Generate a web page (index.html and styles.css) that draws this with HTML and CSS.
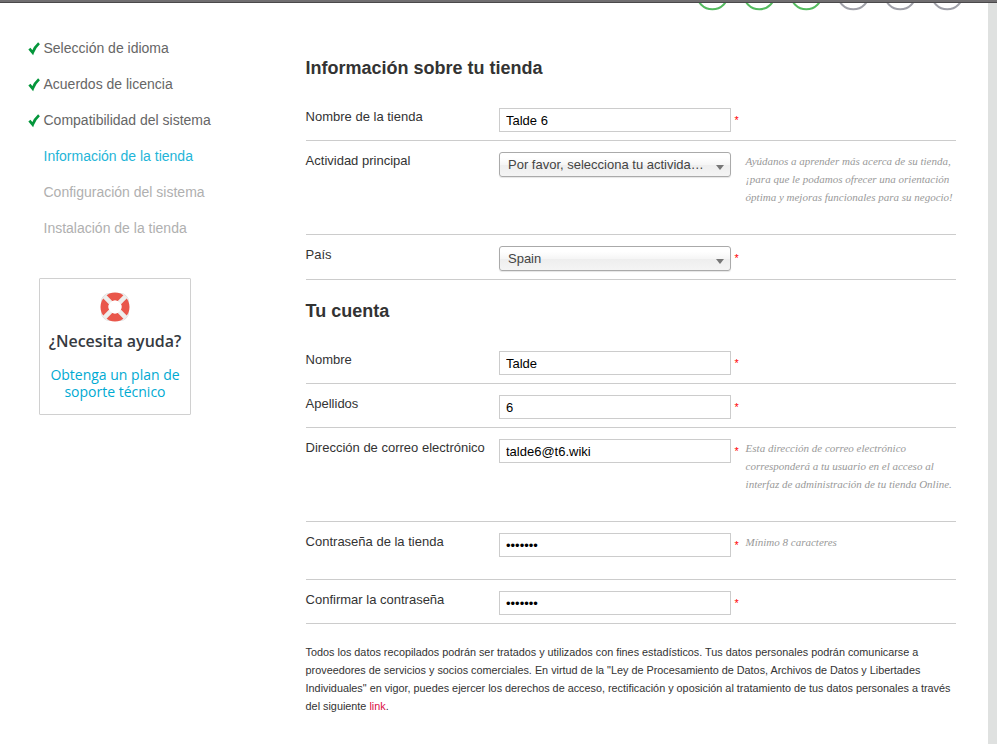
FILE: index.html
```html
<!DOCTYPE html>
<html lang="es">
<head>
<meta charset="utf-8">
<title>Asistente de instalación</title>
<link rel="stylesheet" href="styles.css">
</head>
<body>
<div class="topbar"></div>
<div class="page">
  <div class="steps">
    <svg width="270" height="8" viewBox="0 0 270 8" fill="none" stroke-width="2">
      <g stroke="#54bb5f"><circle cx="16.4" cy="-9.4" r="15.7"/><circle cx="63.3" cy="-9.4" r="15.7"/><circle cx="110.3" cy="-9.4" r="15.7"/></g>
      <g stroke="#9fa0a8"><circle cx="157.3" cy="-9.4" r="15.7"/><circle cx="204.2" cy="-9.4" r="15.7"/><circle cx="251.2" cy="-9.4" r="15.7"/></g>
    </svg>
  </div>
  <div class="columns">
    <aside class="side">
      <ul class="menu">
        <li class="done"><svg class="check" viewBox="0 0 12 13"><path d="M1.4 6.6 4.7 10.6C6 7.2 8 3.9 11 1.3"/></svg>Selección de idioma</li>
        <li class="done"><svg class="check" viewBox="0 0 12 13"><path d="M1.4 6.6 4.7 10.6C6 7.2 8 3.9 11 1.3"/></svg>Acuerdos de licencia</li>
        <li class="done"><svg class="check" viewBox="0 0 12 13"><path d="M1.4 6.6 4.7 10.6C6 7.2 8 3.9 11 1.3"/></svg>Compatibilidad del sistema</li>
        <li class="current">Información de la tienda</li>
        <li>Configuración del sistema</li>
        <li>Instalación de la tienda</li>
      </ul>
      <div class="help">
        <svg class="buoy" viewBox="0 0 30 30">
          <rect x="1.5" y="1.5" width="27" height="27" rx="8" fill="none" stroke="#d4d4d4" stroke-width=".8"/>
          <circle cx="15" cy="15" r="10.5" fill="none" stroke="#e9574b" stroke-width="8"/>
          <path d="m4.2 4.2 6.6 6.6m8.4 8.4 6.6 6.6m0-21.6-6.6 6.6m-8.4 8.4-6.6 6.6" stroke="#eeeeec" stroke-width="4.6"/>
          <circle cx="15" cy="15" r="6.5" fill="#fff"/>
        </svg>
        <div class="help-title">¿Necesita ayuda?</div>
        <div class="help-link"><div>Obtenga un plan de</div><div>soporte técnico</div></div>
      </div>
    </aside>
    <main class="content">
      <h2>Información sobre tu tienda</h2>
      <div class="row"><label>Nombre de la tienda</label><input type="text" value="Talde 6"><sup>*</sup></div>
      <div class="row tall"><label>Actividad principal</label><div class="select">Por favor, selecciona tu activida…</div><sup></sup><p class="hint">Ayúdanos a aprender más acerca de su tienda,<br>¡para que le podamos ofrecer una orientación<br>óptima y mejoras funcionales para su negocio!</p></div>
      <div class="row country"><label>País</label><div class="select">Spain</div><sup>*</sup></div>
      <h2 class="second">Tu cuenta</h2>
      <div class="row"><label>Nombre</label><input type="text" value="Talde"><sup>*</sup></div>
      <div class="row"><label>Apellidos</label><input type="text" value="6"><sup>*</sup></div>
      <div class="row tall"><label>Dirección de correo electrónico</label><input type="text" value="talde6@t6.wiki"><sup>*</sup><p class="hint">Esta dirección de correo electrónico<br>corresponderá a tu usuario en el acceso al<br>interfaz de administración de tu tienda Online.</p></div>
      <div class="row medium"><label>Contraseña de la tienda</label><input type="password" value="1234567"><sup>*</sup><p class="hint">Mínimo 8 caracteres</p></div>
      <div class="row"><label>Confirmar la contraseña</label><input type="password" value="1234567"><sup>*</sup></div>
      <p class="legal">Todos los datos recopilados podrán ser tratados y utilizados con fines estadísticos. Tus datos personales podrán comunicarse a<br>proveedores de servicios y socios comerciales. En virtud de la "Ley de Procesamiento de Datos, Archivos de Datos y Libertades<br>Individuales" en vigor, puedes ejercer los derechos de acceso, rectificación y oposición al tratamiento de tus datos personales a través<br>del siguiente <a>link</a>.</p>
    </main>
  </div>
</div>
</body>
</html>
```
FILE: styles.css
```css
* { box-sizing: border-box; }
body {
  margin: 0;
  height: 744px;
  overflow: hidden;
  background: #fff;
  color: #333;
  font-family: "Liberation Sans", Arial, sans-serif;
  font-size: 13px;
  line-height: 18px;
}
.topbar { height: 3px; background: #706e70; border-bottom: 1px solid #4a484a; }
.page { height: 741px; border-right: 9px solid #dfe1e0; }
.steps { height: 27px; padding-left: 696px; }
.steps svg { display: block; overflow: hidden; }
.columns { display: flex; }
.side { width: 305.6px; flex: none; padding-left: 27px; }
.menu { margin: 0; padding: 0; list-style: none; }
.menu li {
  display: flex;
  align-items: center;
  height: 36px;
  padding-left: 16.5px;
  color: #b0b0b0;
  font-size: 14px;
}
.menu .done { padding-left: 1px; color: #666; }
.menu .current { color: #1fb5d8; }
.check { width: 12px; height: 13px; margin-right: 3.5px; overflow: visible; fill: none; stroke: #04963b; stroke-width: 2.7; }
.help {
  width: 152px;
  height: 137px;
  margin: 32px 0 0 12px;
  padding-top: 13px;
  border: 1px solid #d0d0d0;
  border-radius: 1px;
  text-align: center;
  font-family: "Open Sans", sans-serif;
}
.buoy { display: block; width: 30px; height: 30px; margin: 0 auto; }
.help-title { margin-top: 8px; line-height: 22px; font-size: 16px; font-weight: 600; white-space: nowrap; color: #363a41; }
.help-link { margin-top: 14px; font-size: 14px; line-height: 17px; color: #00aad2; }
.content { width: 650px; }
h2 { margin: 28px 0 19px; font-size: 18px; line-height: 20px; }
h2.second { margin: 21px 0 19px; }
.row { display: flex; align-items: flex-start; height: 44px; padding-top: 11px; border-bottom: 1px solid #ccc; }
.row.tall { height: 94px; }
.row.medium { height: 58px; }
.row.country { height: 45px; }
label { width: 193px; flex: none; white-space: nowrap; }
input {
  width: 232px;
  height: 24px;
  margin: 0;
  padding: 1px 6px 0 6.4px;
  border: 1px solid #ccc;
  border-radius: 0;
  background: #fff;
  color: #000;
  font: 13px "Liberation Sans", Arial, sans-serif;
}
.select {
  display: flex;
  justify-content: space-between;
  width: 232px;
  height: 25px;
  padding: 0 5.6px 0 8.4px;
  border: 1px solid #aaa;
  border-radius: 3px;
  background: linear-gradient(#fff 20%, #f6f6f6 50%, #eee 52%, #f4f4f4 100%);
  box-shadow: 0 1px 1px rgba(0, 0, 0, .1);
  color: #444;
  line-height: 24px;
}
.select::after { content: ""; margin-top: 12px; height: 0; border: 4.5px solid transparent; border-top: 5px solid #777; border-bottom: 0; }
sup { width: 15px; padding: 3px 0 0 4px; flex: none; color: #f00; font-size: 10.8px; line-height: 18px; }
.hint { margin: 0; color: #999; font: italic 11px/18px "Liberation Serif", serif; white-space: nowrap; }
.legal { margin: 19px 0 0; font-size: 10.83px; white-space: nowrap; }
.legal a { color: #db0c45; }
```
